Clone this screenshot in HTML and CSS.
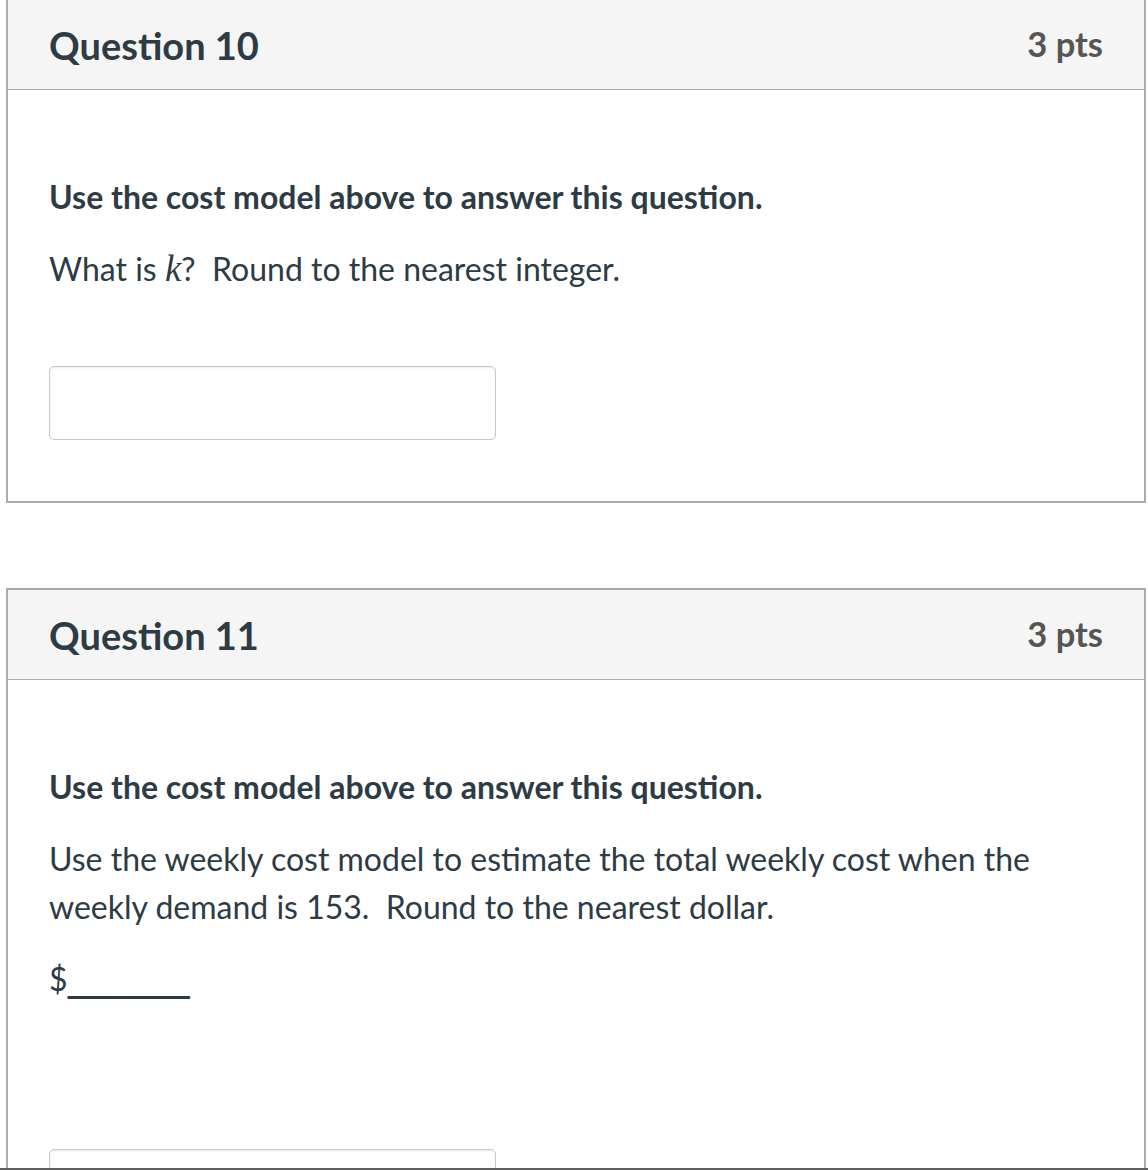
FILE: index.html
```html
<!DOCTYPE html>
<html lang="en">
<head>
<meta charset="utf-8">
<title>Quiz</title>
<link rel="stylesheet" href="styles.css">
</head>
<body>
<main class="quiz">
  <section class="question first">
    <header class="q-header">
      <h2 class="q-name">Question 10</h2>
      <span class="q-pts">3 pts</span>
    </header>
    <div class="q-body">
      <p class="q-lead">Use the cost model above to answer this question.</p>
      <p class="q-text">What is <span class="math">k</span>?&nbsp; Round to the nearest integer.</p>
      <div class="answer"><input class="answer-input" type="text" aria-label="Answer"></div>
    </div>
  </section>

  <section class="question">
    <header class="q-header">
      <h2 class="q-name">Question 11</h2>
      <span class="q-pts">3 pts</span>
    </header>
    <div class="q-body tall">
      <p class="q-lead">Use the cost model above to answer this question.</p>
      <p class="q-text">Use the weekly cost model to estimate the total weekly cost when the weekly demand is 153.&nbsp; Round to the nearest dollar.</p>
      <p class="q-text blank">$<span class="blank-line">________</span></p>
      <div class="answer late"><input class="answer-input" type="text" aria-label="Answer"></div>
    </div>
  </section>
</main>
<div class="screen-edge"></div>
</body>
</html>
```
FILE: styles.css
```css
html, body {
  margin: 0;
  padding: 0;
  background: #ffffff;
}
body {
  font-family: Lato, "Noto Sans", sans-serif;
  color: #2d3b45;
  overflow: hidden;
}
.quiz {
  margin: -2px 2px 0 6px;
  display: flex;
  flex-direction: column;
  gap: 85px;
}
.question {
  border: 2px solid #aaaaaa;
  background: #ffffff;
}
.q-header {
  height: 90px;
  box-sizing: border-box;
  background: #f5f5f5;
  border-bottom: 1px solid #aaaaaa;
  display: flex;
  align-items: center;
  justify-content: space-between;
  padding: 0 41px;
}
.q-name {
  margin: 0;
  font-size: 38px;
  font-weight: 700;
  color: #2d3b45;
  line-height: 1;
}
.q-pts {
  font-size: 34.5px;
  font-weight: 700;
  color: #555555;
  line-height: 1;
}
.q-body {
  padding: 83px 41px 61px;
  font-size: 32px;
  line-height: 48px;
}
.q-body p {
  margin: 0 0 24px;
}
.q-lead {
  font-weight: 700;
}
.math {
  font-family: "Liberation Serif", "DejaVu Serif", serif;
  font-style: italic;
  font-size: 37px;
}
.blank {
  margin-top: 2px;
}
.blank-line {
  font-family: "DejaVu Sans", sans-serif;
  font-weight: 700;
  letter-spacing: -0.8px;
}
.answer {
  padding-top: 49px;
}
.answer.late {
  padding-top: 121px;
}
.answer-input {
  display: block;
  width: 447px;
  height: 74px;
  box-sizing: border-box;
  border: 1px solid #c8c8c8;
  border-radius: 5px;
  box-shadow: inset 0 1px 2px rgba(0,0,0,0.08);
  background: #ffffff;
  margin: 0;
  padding: 0 12px;
  font-size: 32px;
  font-family: Lato, sans-serif;
}
.q-body.tall {
  min-height: 600px;
}
.screen-edge {
  position: fixed;
  left: 0;
  right: 0;
  bottom: 0;
  height: 2px;
  background: #5f5f5f;
}
```
